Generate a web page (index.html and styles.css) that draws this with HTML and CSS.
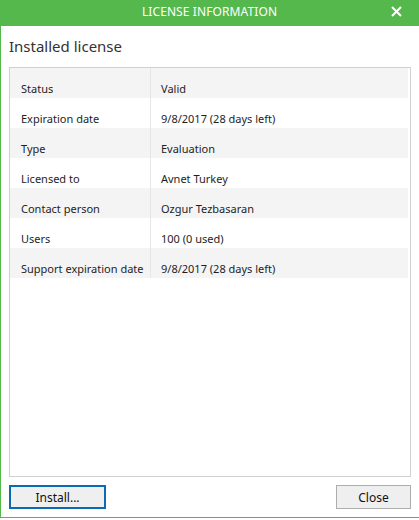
FILE: index.html
```html
<!DOCTYPE html>
<html lang="en">
  <head>
    <meta charset="UTF-8" />
    <title>License Information</title>
    <link rel="stylesheet" href="styles.css">
  </head>
  <body>
    <div class="window">
      <div class="titlebar">
        <span></span>
        <span class="title">LICENSE INFORMATION</span>
        <span class="close-x">
          <svg width="11" height="11" viewBox="0 0 11 11">
            <path d="M1 1 L10 10 M10 1 L1 10" stroke="#fff" stroke-width="2" />
          </svg>
        </span>
      </div>
      <div class="content">
        <h3 class="section-title">Installed license</h3>
        <div class="panel">
          <div class="row">
            <div class="label">Status</div>
            <div class="value">Valid</div>
          </div>
          <div class="row">
            <div class="label">Expiration date</div>
            <div class="value">9/8/2017 (28 days left)</div>
          </div>
          <div class="row">
            <div class="label">Type</div>
            <div class="value">Evaluation</div>
          </div>
          <div class="row">
            <div class="label">Licensed to</div>
            <div class="value">Avnet Turkey</div>
          </div>
          <div class="row">
            <div class="label">Contact person</div>
            <div class="value">Ozgur Tezbasaran</div>
          </div>
          <div class="row">
            <div class="label">Users</div>
            <div class="value">100 (0 used)</div>
          </div>
          <div class="row">
            <div class="label">Support expiration date</div>
            <div class="value">9/8/2017 (28 days left)</div>
          </div>
        </div>
        <div class="buttons">
          <button class="btn btn-default">Install...</button>
          <button class="btn">Close</button>
        </div>
      </div>
    </div>
  </body>
</html>
```

FILE: styles.css
```css
* {
  margin: 0;
  padding: 0;
  box-sizing: border-box;
  font-family: "Noto Sans", "Open Sans", sans-serif;
}
body {
  background-color: #ffffff;
}
.window {
  height: 518px;
  display: flex;
  flex-direction: column;
  background: white;
  border-left: 1px solid #52b848;
  border-bottom: 1px solid #52b848;
}
.titlebar {
  height: 26px;
  display: grid;
  grid-template-columns: 1fr auto 1fr;
  align-items: center;
  padding-bottom: 3px;
  background-color: #55b84c;
  color: white;
  margin-left: -1px;
}
.title {
  font-size: 12px;
  letter-spacing: 0.1px;
}
.close-x {
  justify-self: end;
  display: flex;
  padding-right: 17px;
}
.content {
  flex: 1;
  display: flex;
  flex-direction: column;
  padding: 0 8px 8px 8px;
}
.section-title {
  font-size: 15px;
  font-weight: normal;
  color: #333;
  height: 41px;
  padding-top: 10px;
}
.panel {
  flex: 1;
  border: 1px solid #d0d0d0;
  padding-right: 2px;
}
.row {
  display: flex;
  height: 30px;
  font-size: 11px;
  color: #1e1e1e;
}
.row:nth-child(odd) {
  background-color: #f4f4f4;
}
.label {
  width: 141px;
  padding: 13px 0 0 11px;
  border-right: 1px solid #e6e6e6;
}
.value {
  flex: 1;
  padding: 13px 0 0 10px;
}
.buttons {
  display: flex;
  justify-content: space-between;
  margin-top: 8px;
}
.btn {
  width: 75px;
  height: 24px;
  background-color: #efefef;
  border: 1px solid #adadad;
  font-size: 12px;
  color: #111;
}
.btn-default {
  width: 97px;
  border: 2px solid #0a6ab4;
}
```
